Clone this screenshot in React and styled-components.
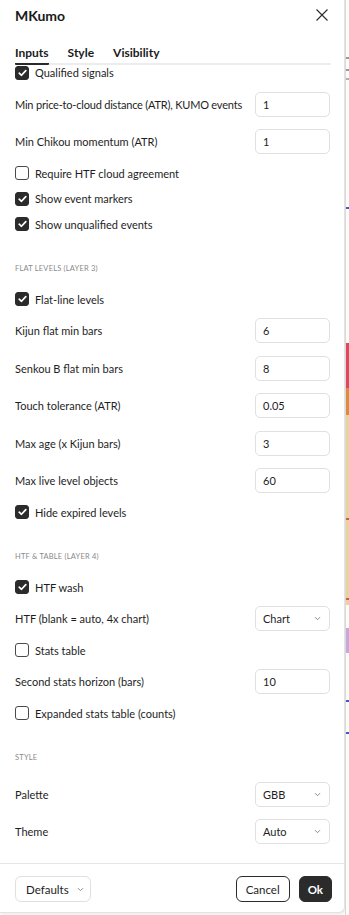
import { useLayoutEffect, useRef } from "react";
import styled, { createGlobalStyle } from "styled-components";

const GlobalStyle = createGlobalStyle`
  html, body {
    margin: 0;
    padding: 0;
    background: #ffffff;
  }
  body {
    font-family: Lato, "Open Sans", Arial, sans-serif;
    color: #1e1e1e;
    -webkit-font-smoothing: antialiased;
  }
`;

const Page = styled.div`
  display: flex;
  width: 349px;
  height: 915px;
  overflow: hidden;
  background: #fcfcfc;
`;

const Dialog = styled.div`
  width: 345px;
  height: 913px;
  flex-shrink: 0;
  box-sizing: border-box;
  display: flex;
  flex-direction: column;
  background: #ffffff;
  border-right: 1px solid #e3e3e3;
  border-bottom: 1px solid #e3e3e3;
  border-radius: 0 0 6px 0;
  box-shadow: 1px 1px 3px rgba(0, 0, 0, 0.08);
`;

const Header = styled.div`
  height: 30px;
  display: flex;
  align-items: center;
  justify-content: space-between;
  padding: 0 15px 0 15px;
`;

const Title = styled.h1`
  margin: 0;
  font-size: 14px;
  font-weight: 700;
  color: #1a1a1a;
`;

const CloseButton = styled.button`
  border: none;
  background: none;
  padding: 0;
  width: 14px;
  height: 14px;
  display: flex;
  cursor: pointer;
`;

const TabBar = styled.div`
  height: 33px;
  margin: 0 13px 0 15px;
  display: flex;
  align-items: flex-end;
  border-bottom: 2px solid #ededed;
`;

const Tab = styled.div`
  font-size: 12px;
  font-weight: 700;
  line-height: 16px;
  padding-bottom: 2px;
  margin-right: 19px;
  margin-bottom: -2px;
  border-bottom: 2px solid ${(p) => (p.$active ? "#2a2a2a" : "transparent")};
  border-radius: 1px;
  color: #1a1a1a;
  cursor: pointer;
`;

const Scroller = styled.div`
  flex: 1;
  overflow-y: auto;
  scrollbar-width: none;
  padding: 0 14px 0 15px;
`;

const Content = styled.div`
  padding-bottom: 12.5px;
`;

const CheckRow = styled.label`
  height: 25.5px;
  display: flex;
  align-items: center;
  gap: 6px;
  font-size: 11px;
  white-space: nowrap;
  color: #1e1e1e;
`;

const Box = styled.span`
  width: 14px;
  height: 14px;
  box-sizing: border-box;
  border-radius: 3px;
  display: flex;
  align-items: center;
  justify-content: center;
  background: ${(p) => (p.$on ? "#2b2b2b" : "#ffffff")};
  border: 1px solid ${(p) => (p.$on ? "#2b2b2b" : "#4a4a4a")};
`;

const FieldRow = styled.div`
  height: 37.5px;
  display: flex;
  align-items: center;
  justify-content: space-between;
  font-size: 11px;
  white-space: nowrap;
  color: #1e1e1e;
`;

const Label = styled.span`
  letter-spacing: ${(p) => p.$tight || 0}px;
`;

const Field = styled.div`
  width: 75px;
  height: 25px;
  flex-shrink: 0;
  box-sizing: border-box;
  border: 1px solid #e0e0e0;
  border-radius: 5px;
  display: flex;
  align-items: center;
  justify-content: space-between;
  padding: 0 8px 0 7px;
  font-size: 11px;
  color: #1e1e1e;
`;

const Section = styled.div`
  height: 49.5px;
  box-sizing: border-box;
  padding-top: 13px;
  display: flex;
  align-items: center;
  font-size: 7.5px;
  letter-spacing: 0.2px;
  text-transform: uppercase;
  color: #8a8a8a;
`;

const Footer = styled.div`
  border-top: 1px solid #e6e6e6;
  padding: 12px 12px 10px 15px;
  display: flex;
  align-items: center;
  gap: 9px;
`;

const Button = styled.button`
  height: 26px;
  box-sizing: border-box;
  border-radius: 6px;
  font-family: inherit;
  font-size: 11.5px;
  display: flex;
  align-items: center;
  gap: 8px;
  padding: 0 ${(p) => p.$padR ?? p.$pad}px 0 ${(p) => p.$pad}px;
  cursor: pointer;
  background: ${(p) => (p.$variant === "primary" ? "#2b2b2b" : "#ffffff")};
  color: ${(p) => (p.$variant === "primary" ? "#ffffff" : "#1e1e1e")};
  font-weight: ${(p) => (p.$variant === "primary" ? 700 : 400)};
  border: 1px solid
    ${(p) => (p.$variant === "ghost" ? "#e0e0e0" : "#2b2b2b")};
`;

const Spacer = styled.div`
  flex: 1;
`;

const ChartStrip = styled.div`
  flex: 1;
  position: relative;
  border-left: 1px solid #d9d9d9;
  background: #fbfbf8;
`;

const Mark = styled.div`
  position: absolute;
  left: 0;
  right: 0;
`;

const Check = () => (
  <svg width="9" height="8" viewBox="0 0 9 8">
    <polyline points="1.2,4.2 3.5,6.3 7.8,1.6" fill="none" stroke="#fff" strokeWidth="1.7" strokeLinecap="round" strokeLinejoin="round" />
  </svg>
);

const Chevron = () => (
  <svg width="7" height="5" viewBox="0 0 7 5">
    <polyline points="1,1.2 3.5,3.7 6,1.2" fill="none" stroke="#8a8a8a" strokeWidth="1" />
  </svg>
);

const CheckItem = ({ on, children }) => (
  <CheckRow>
    <Box $on={on}>{on && <Check />}</Box>
    {children}
  </CheckRow>
);

const InputItem = ({ label, value, select, tight }) => (
  <FieldRow>
    <Label $tight={tight}>{label}</Label>
    <Field>
      <span>{value}</span>
      {select && <Chevron />}
    </Field>
  </FieldRow>
);

const marks = [
  { top: 57, h: 2, c: "#9a9a9a" },
  { top: 69, h: 2, c: "#9a9a9a" },
  { top: 78, h: 2, c: "#b0b0b0" },
  { top: 207, h: 2, c: "#3b5bd6" },
  { top: 343, h: 45, c: "#e0475a" },
  { top: 388, h: 27, c: "#e08a3c" },
  { top: 415, h: 190, c: "#e9d39c" },
  { top: 518, h: 2, c: "#d0603a" },
  { top: 598, h: 2, c: "#d0603a" },
  { top: 628, h: 25, c: "#c9a6dc" },
  { top: 700, h: 2, c: "#3b5bd6" },
  { top: 732, h: 2, c: "#3b5bd6" },
];

export default function App() {
  const scrollRef = useRef(null);

  useLayoutEffect(() => {
    if (scrollRef.current) scrollRef.current.scrollTop = 6;
  }, []);

  return (
    <>
      <GlobalStyle />
      <Page>
        <Dialog>
          <Header>
            <Title>MKumo</Title>
            <CloseButton aria-label="Close">
              <svg width="14" height="14" viewBox="0 0 14 14">
                <path d="M1.5 1.5 L12.5 12.5 M12.5 1.5 L1.5 12.5" stroke="#2a2a2a" strokeWidth="1.1" />
              </svg>
            </CloseButton>
          </Header>
          <TabBar>
            <Tab $active>Inputs</Tab>
            <Tab>Style</Tab>
            <Tab>Visibility</Tab>
          </TabBar>
          <Scroller ref={scrollRef}>
            <Content>
              <CheckItem on>Qualified signals</CheckItem>
              <InputItem label="Min price-to-cloud distance (ATR), KUMO events" value="1" tight={-0.2} />
              <InputItem label="Min Chikou momentum (ATR)" value="1" />
              <CheckItem>Require HTF cloud agreement</CheckItem>
              <CheckItem on>Show event markers</CheckItem>
              <CheckItem on>Show unqualified events</CheckItem>

              <Section>Flat levels (layer 3)</Section>
              <CheckItem on>Flat-line levels</CheckItem>
              <InputItem label="Kijun flat min bars" value="6" />
              <InputItem label="Senkou B flat min bars" value="8" />
              <InputItem label="Touch tolerance (ATR)" value="0.05" />
              <InputItem label="Max age (x Kijun bars)" value="3" />
              <InputItem label="Max live level objects" value="60" />
              <CheckItem on>Hide expired levels</CheckItem>

              <Section>HTF &amp; table (layer 4)</Section>
              <CheckItem on>HTF wash</CheckItem>
              <InputItem label="HTF (blank = auto, 4x chart)" value="Chart" select />
              <CheckItem>Stats table</CheckItem>
              <InputItem label="Second stats horizon (bars)" value="10" />
              <CheckItem>Expanded stats table (counts)</CheckItem>

              <Section>Style</Section>
              <InputItem label="Palette" value="GBB" select />
              <InputItem label="Theme" value="Auto" select />
            </Content>
          </Scroller>
          <Footer>
            <Button $variant="ghost" $pad={10} $padR={6}>
              Defaults <Chevron />
            </Button>
            <Spacer />
            <Button $pad={9}>Cancel</Button>
            <Button $variant="primary" $pad={8}>Ok</Button>
          </Footer>
        </Dialog>
        <ChartStrip>
          {marks.map((m, i) => (
            <Mark key={i} style={{ top: m.top, height: m.h, background: m.c }} />
          ))}
        </ChartStrip>
      </Page>
    </>
  );
}
